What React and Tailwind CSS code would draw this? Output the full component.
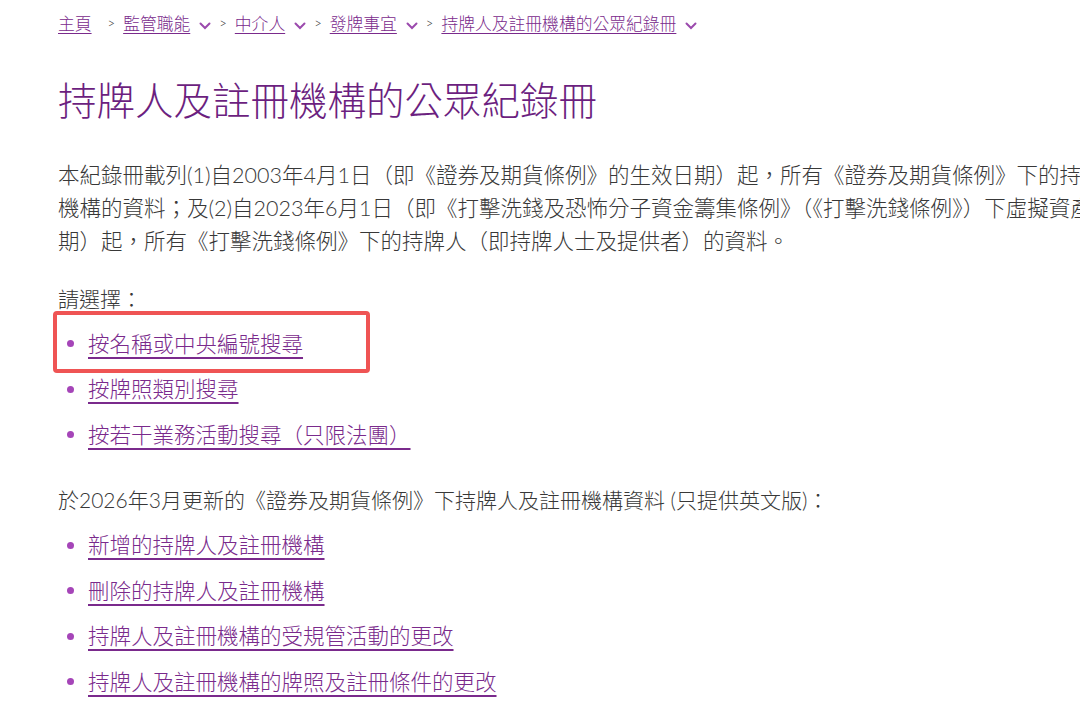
const crumbs = [
  { label: "主頁", menu: false },
  { label: "監管職能", menu: true },
  { label: "中介人", menu: true },
  { label: "發牌事宜", menu: true },
  { label: "持牌人及註冊機構的公眾紀錄冊", menu: true, last: true },
]

const Chevron = () => (
  <svg width="12" height="8" viewBox="0 0 12 8" className="ml-[9px] mt-[4px] shrink-0">
    <polyline points="1.5,1.5 6,6 10.5,1.5" fill="none" stroke="#9b4aad" strokeWidth="2" strokeLinecap="round" />
  </svg>
)

const Bullet = () => <span className="mr-[14px] ml-[9px] inline-block h-[7px] w-[7px] shrink-0 rounded-full bg-[#a545b8]" />

const LinkItem = ({ children }) => (
  <li className="flex h-[45.5px] items-center">
    <Bullet />
    <a href="#" className="text-[21.5px] text-[#7a2a8c] underline decoration-[2px] underline-offset-[5px]">
      {children}
    </a>
  </li>
)

export default function App() {
  return (
    <div
      className="h-[717px] w-[1080px] overflow-hidden bg-white font-light text-[#383838]"
      style={{ fontFamily: 'Lato, "Noto Sans CJK TC", sans-serif' }}
    >
      <div className="w-[1400px] pl-[58px]">
        <nav className="flex h-[48px] items-center text-[16.8px]">
          {crumbs.map((c, i) => (
            <div key={i} className="flex items-center">
              {i > 0 && <span className="mx-[8px] text-[13px] text-[#333]">&gt;</span>}
              <a href="#" className="text-[#7a2a8c] underline underline-offset-[3px]">
                {c.label}
              </a>
              {c.menu && <Chevron />}
              {i === 0 && <span className="w-[8px]" />}
            </div>
          ))}
        </nav>

        <h1 className="mt-[28px] text-[38.5px] font-light leading-[48px] text-[#6c1f80]">持牌人及註冊機構的公眾紀錄冊</h1>

        <div className="mt-[35px] whitespace-nowrap text-[21.5px] leading-[33px]">
          <p>本紀錄冊載列(1)自2003年4月1日（即《證券及期貨條例》的生效日期）起，所有《證券及期貨條例》下的持牌人及註冊</p>
          <p>機構的資料；及(2)自2023年6月1日（即《打擊洗錢及恐怖分子資金籌集條例》（《打擊洗錢條例》）下虛擬資產交易平台</p>
          <p>期）起，所有《打擊洗錢條例》下的持牌人（即持牌人士及提供者）的資料。</p>
        </div>

        <p className="mt-[24px] text-[21px] leading-[33px]">請選擇：</p>

        <ul className="mt-[6px]">
          <li className="relative flex h-[45.5px] items-center">
            <span className="pointer-events-none absolute left-[-5px] top-[-10px] h-[62px] w-[317px] rounded-[4px] border-[4px] border-[#ef5454]" />
            <Bullet />
            <a href="#" className="text-[21.5px] text-[#7a2a8c] underline decoration-[2px] underline-offset-[5px]">
              按名稱或中央編號搜尋
            </a>
          </li>
          <LinkItem>按牌照類別搜尋</LinkItem>
          <LinkItem>按若干業務活動搜尋（只限法團）</LinkItem>
        </ul>

        <p className="mt-[25px] text-[21px] leading-[33px]">於2026年3月更新的《證券及期貨條例》下持牌人及註冊機構資料 (只提供英文版)：</p>

        <ul className="mt-[7px]">
          <LinkItem>新增的持牌人及註冊機構</LinkItem>
          <LinkItem>刪除的持牌人及註冊機構</LinkItem>
          <LinkItem>持牌人及註冊機構的受規管活動的更改</LinkItem>
          <LinkItem>持牌人及註冊機構的牌照及註冊條件的更改</LinkItem>
        </ul>
      </div>
    </div>
  )
}
